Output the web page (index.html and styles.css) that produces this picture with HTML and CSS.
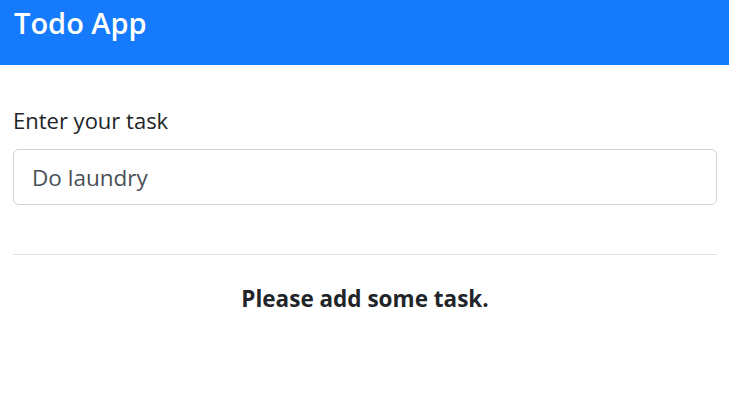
FILE: index.html
```html
<!DOCTYPE html>
<html>
<head>
<meta charset="utf-8">
<link rel="stylesheet" href="styles.css">
</head>
<body>
<nav class="navbar"><span class="brand">Todo App</span></nav>
<main class="container">
  <label class="label" for="task">Enter your task</label>
  <input class="input" id="task" type="text" value="Do laundry">
  <hr class="divider">
  <p class="empty">Please add some task.</p>
</main>
</body>
</html>
```
FILE: styles.css
```css
* { box-sizing: border-box; }
body {
  margin: 0;
  font-family: "Open Sans", "Noto Sans", sans-serif;
  color: #212529;
  background: #fff;
}
.navbar {
  height: 65px;
  background: #157afb;
  display: flex;
  align-items: flex-start;
  padding: 3px 14px 0;
}
.brand {
  color: #fff;
  font-size: 29px;
  line-height: 40px;
  font-weight: 600;
}
.container {
  padding: 39px 12px 0 13px;
  display: flex;
  flex-direction: column;
}
.label {
  font-size: 22px;
  line-height: 32px;
  margin-bottom: 13px;
}
.input {
  height: 56px;
  width: 100%;
  border: 1px solid #ced4da;
  border-radius: 6px;
  padding: 0 18px;
  font-family: inherit;
  font-size: 22.5px;
  color: #495057;
  outline: none;
}
.divider {
  margin: 49px 0 0;
  border: 0;
  border-top: 1px solid #e3e3e3;
}
.empty {
  margin: 28px 0 0;
  text-align: center;
  font-size: 22.5px;
  line-height: 32px;
  font-weight: 700;
}
```
